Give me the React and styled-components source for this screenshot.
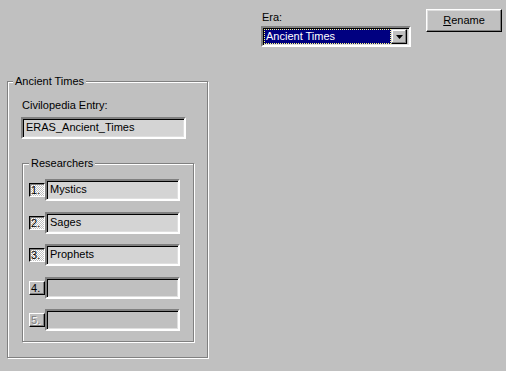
import styled, { createGlobalStyle } from "styled-components";

const Global = createGlobalStyle`
  html, body {
    margin: 0;
    padding: 0;
    background: #c0c0c0;
  }
`;

const Page = styled.div`
  width: 506px;
  height: 371px;
  background: #c0c0c0;
  font-family: "Liberation Sans", Arial, sans-serif;
  font-size: 11px;
  line-height: 13px;
  color: #000;
  display: flex;
  flex-direction: column;
  overflow: hidden;
`;

const Header = styled.div`
  display: flex;
  justify-content: flex-end;
  align-items: flex-start;
  gap: 15px;
  padding: 9px 4px 0 0;
`;

const EraColumn = styled.div`
  width: 150px;
  margin-top: 2px;
  display: flex;
  flex-direction: column;
  gap: 2px;
`;

const Label = styled.div`
  padding-left: 1px;
  height: 13px;
`;

const Sunken = styled.div`
  box-sizing: border-box;
  border: 2px solid;
  border-color: #808080 #fff #fff #808080;
  box-shadow: inset 1px 1px 0 #000, inset -1px -1px 0 #dfdfdf;
`;

const Combo = styled(Sunken)`
  height: 21px;
  display: flex;
  padding: 1px 2px 1px 1px;
`;

const ComboValue = styled.div`
  flex: 1;
  background: #000080;
  color: #fff;
  padding: 1px 2px;
  line-height: 13px;
  outline: 1px dotted #ffff80;
  outline-offset: -1px;
`;

const ComboArrow = styled.div`
  width: 16px;
  box-sizing: border-box;
  border: 1px solid;
  border-color: #dfdfdf #000 #000 #dfdfdf;
  box-shadow: inset -1px -1px 0 #808080, inset 1px 1px 0 #fff;
  background: #c0c0c0;
  display: flex;
  align-items: center;
  justify-content: center;
`;

const Button = styled.button`
  width: 76px;
  height: 23px;
  box-sizing: border-box;
  padding: 0;
  font: inherit;
  color: #000;
  background: #c0c0c0;
  border: 1px solid;
  border-color: #fff #000 #000 #fff;
  box-shadow: inset -1px -1px 0 #808080, inset 1px 1px 0 #dfdfdf;
  u {
    text-decoration: underline;
  }
`;

const Group = styled.fieldset`
  box-sizing: border-box;
  margin: 0;
  padding: 0;
  min-width: 0;
  border: 1px solid #808080;
  box-shadow: 1px 1px 0 #fff, inset 1px 1px 0 #fff;
  width: ${(p) => p.$w}px;
  height: ${(p) => p.$h}px;
`;

const Title = styled.legend`
  padding: 0 2px;
  margin-left: ${(p) => p.$indent}px;
  background: #c0c0c0;
  line-height: 13px;
  height: 13px;
`;

const OuterGroup = styled(Group)`
  margin: 28px 0 0 7px;
`;

const OuterBody = styled.div`
  padding: 11px 0 0 13px;
  display: flex;
  flex-direction: column;
`;

const EntryLabel = styled.div`
  padding-left: 1px;
`;

const Field = styled(Sunken)`
  height: 22px;
  padding: 2px 3px;
  background: ${(p) => (p.$filled ? "#d4d4d4" : "#c0c0c0")};
  white-space: nowrap;
  overflow: hidden;
`;

const EntryField = styled(Field)`
  width: 165px;
  margin-top: 5px;
`;

const InnerGroup = styled(Group)`
  margin: 18px 0 0 1px;
`;

const Rows = styled.div`
  padding: 9px 0 0 6px;
  display: flex;
  flex-direction: column;
  gap: 10.5px;
`;

const Row = styled.div`
  display: flex;
  align-items: center;
`;

const NumButton = styled.div`
  width: 16px;
  height: 14px;
  box-sizing: border-box;
  border: 1px solid;
  line-height: 12px;
  padding-left: 1px;
  ${(p) =>
    p.$pressed
      ? `
    border-color: #000 #fff #fff #000;
    box-shadow: inset 1px 1px 0 #808080;
    background: repeating-conic-gradient(#fff 0 25%, #c0c0c0 0 50%) 0 0 / 2px 2px;
  `
      : `
    border-color: #fff #000 #000 #fff;
    box-shadow: inset -1px -1px 0 #808080;
    background: #c0c0c0;
  `}
  color: ${(p) => (p.$disabled ? "#808080" : "#000")};
  text-shadow: ${(p) => (p.$disabled ? "1px 1px 0 #fff" : "none")};
`;

const RowField = styled(Field)`
  width: 135px;
`;

const researchers = [
  { n: 1, name: "Mystics" },
  { n: 2, name: "Sages" },
  { n: 3, name: "Prophets" },
  { n: 4, name: "" },
  { n: 5, name: "", disabled: true },
];

export default function App() {
  return (
    <>
      <Global />
      <Page>
        <Header>
          <EraColumn>
            <Label>Era:</Label>
            <Combo>
              <ComboValue>Ancient Times</ComboValue>
              <ComboArrow>
                <svg width="7" height="4" viewBox="0 0 7 4">
                  <polygon points="0,0 7,0 3.5,4" fill="#000" />
                </svg>
              </ComboArrow>
            </Combo>
          </EraColumn>
          <Button>
            <u>R</u>ename
          </Button>
        </Header>
        <OuterGroup $w={201} $h={283}>
          <Title $indent={5}>Ancient Times</Title>
          <OuterBody>
            <EntryLabel>Civilopedia Entry:</EntryLabel>
            <EntryField $filled>ERAS_Ancient_Times</EntryField>
            <InnerGroup $w={172} $h={185}>
              <Title $indent={6}>Researchers</Title>
              <Rows>
                {researchers.map((r) => (
                  <Row key={r.n}>
                    <NumButton $pressed={!!r.name} $disabled={r.disabled}>
                      {r.n}.
                    </NumButton>
                    <RowField $filled={!!r.name}>{r.name}</RowField>
                  </Row>
                ))}
              </Rows>
            </InnerGroup>
          </OuterBody>
        </OuterGroup>
      </Page>
    </>
  );
}
